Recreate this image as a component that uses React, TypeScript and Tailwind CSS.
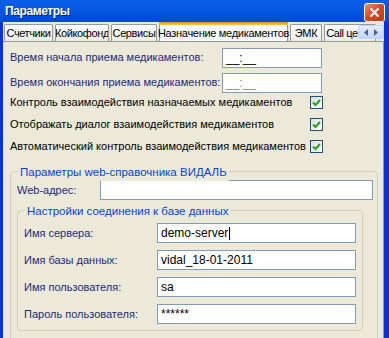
const font = { fontFamily: '"Liberation Sans", Arial, sans-serif' };

function TextBox({ value, w, dim, caret }: { value: string; w: string; dim?: boolean; caret?: boolean }) {
  return (
    <div className={`${w} shrink-0 h-[20px] border border-[#7f9db9] bg-white flex items-center px-[3px] text-[12px] ${dim ? "text-[#8a8a8a]" : "text-black"}`}>
      {value}
      {caret && <span className="ml-[1px] inline-block h-[13px] w-[1px] bg-black" />}
    </div>
  );
}

function Check() {
  return (
    <div className="w-[13px] h-[13px] shrink-0 border border-[#1c5180] bg-gradient-to-br from-[#dcdcd7] to-white flex items-center justify-center">
      <svg width="9" height="9" viewBox="0 0 9 9">
        <path d="M1 4.5 L3.5 7 L8 2" stroke="#21a121" strokeWidth="2" fill="none" />
      </svg>
    </div>
  );
}

function Tab({ label, w, active }: { label: string; w: string; active?: boolean }) {
  if (active) {
    return (
      <div className={`${w} shrink-0 h-[20px] border-x border-[#919b9c] bg-[#fcfcfe] relative z-10 flex flex-col whitespace-nowrap`}>
        <div className="h-[3px] bg-gradient-to-b from-[#e68b2c] to-[#ffc73c] -mx-[1px] rounded-t-[2px]" />
        <div className="flex-1 flex items-center justify-center text-[11px] tracking-[-0.3px] text-black">{label}</div>
      </div>
    );
  }
  return (
    <div className={`${w} shrink-0 h-[17px] mt-[2px] border border-b-0 border-[#919b9c] rounded-t-[2px] bg-gradient-to-b from-white to-[#ecebe6] flex items-center justify-center text-[11px] tracking-[-0.4px] text-black overflow-hidden whitespace-nowrap`}>
      {label}
    </div>
  );
}

function Row({ label, children }: { label: string; children: React.ReactNode }) {
  return (
    <div className="flex items-center h-[20px]">
      <div className="w-[133px] shrink-0 text-[11px] text-[#1b2a7a] whitespace-nowrap">{label}</div>
      {children}
    </div>
  );
}

export default function App() {
  return (
    <div style={font} className="w-[389px] h-[338px] overflow-hidden bg-[#0831d9] flex flex-col">
      {/* title bar */}
      <div className="h-[22px] shrink-0 bg-gradient-to-b from-[#0a5fe9] via-[#0457e0] to-[#0249cd] flex items-center justify-between pl-[5px] pr-[4px]">
        <span className="text-white font-bold text-[12px] tracking-[-0.4px] [text-shadow:1px_1px_#0a1e6e]">Параметры</span>
        <div className="w-[21px] h-[19px] mt-[2px] rounded-[3px] border border-white bg-gradient-to-br from-[#e98a6e] via-[#d7471f] to-[#c23a12] flex items-center justify-center">
          <svg width="11" height="11" viewBox="0 0 11 11">
            <path d="M1.5 1.5 L9.5 9.5 M9.5 1.5 L1.5 9.5" stroke="white" strokeWidth="2.2" />
          </svg>
        </div>
      </div>

      {/* body */}
      <div className="flex-1 ml-[3px] mr-[5px] bg-[#ece9d8] flex flex-col">
        {/* tabs */}
        <div className="h-[19px] shrink-0 flex items-start gap-[2px] pl-[1px] relative overflow-hidden">
          <Tab label="Счетчики" w="w-[49px]" />
          <Tab label="Койкофонд" w="w-[54px]" />
          <Tab label="Сервисы" w="w-[46px]" />
          <Tab label="Назначение медикаментов" w="w-[129px]" active />
          <Tab label="ЭМК" w="w-[32px]" />
          <Tab label="Call центр" w="w-[52px]" />
          <div className="absolute right-0 top-[3px] w-[26px] h-[14px] border border-[#c3d3fd] bg-gradient-to-b from-[#e4ecfd] to-[#c1d3fb] rounded-[2px] flex items-center justify-around px-[2px]">
            <svg width="4" height="7" viewBox="0 0 4 7"><path d="M4 0 L0 3.5 L4 7Z" fill="#4d6185" /></svg>
            <svg width="4" height="7" viewBox="0 0 4 7"><path d="M0 0 L4 3.5 L0 7Z" fill="#4d6185" /></svg>
          </div>
        </div>

        {/* panel */}
        <div className="flex-1 border-t border-r border-[#919b9c] pl-[7px] pt-[6px]">
          <div className="flex flex-col gap-[6px]">
            <div className="flex items-center h-[19px]">
              <div className="w-[212px] shrink-0 text-[11px] text-[#1b2a7a] whitespace-nowrap">Время начала приема медикаментов:</div>
              <TextBox value="__:__" w="w-[100px]" />
            </div>
            <div className="flex items-center h-[19px]">
              <div className="w-[212px] shrink-0 text-[11px] text-[#1b2a7a] whitespace-nowrap">Время окончания приема медикаментов:</div>
              <TextBox value="__:__" w="w-[100px]" dim />
            </div>
          </div>

          <div className="flex flex-col gap-[9px] mt-[4px] text-[11px] text-black whitespace-nowrap">
            <div className="flex items-center h-[13px]">
              <div className="w-[300px] shrink-0">Контроль взаимодействия назначаемых медикаментов</div>
              <Check />
            </div>
            <div className="flex items-center h-[13px]">
              <div className="w-[300px] shrink-0">Отображать диалог взаимодействия медикаментов</div>
              <Check />
            </div>
            <div className="flex items-center h-[13px]">
              <div className="w-[300px] shrink-0">Автоматический контроль взаимодействия медикаментов</div>
              <Check />
            </div>
          </div>

          {/* VIDAL group */}
          <div className="mt-[18px] mr-[5px] relative border border-[#d0d0bf] rounded-[4px] h-[200px] pl-[6px] pt-[8px]">
            <span className="absolute -top-[8px] left-[7px] px-[2px] bg-[#ece9d8] text-[11.5px] text-[#0046d5] whitespace-nowrap">Параметры web-справочника ВИДАЛЬ</span>
            <div className="flex items-center h-[20px]">
              <div className="w-[83px] shrink-0 text-[11px] text-[#1b2a7a]">Web-адрес:</div>
              <TextBox value="" w="w-[273px]" />
            </div>

            <div className="mt-[10px] mr-[14px] relative border border-[#d0d0bf] rounded-[4px] h-[121px] pl-[6px] pt-[12px] flex flex-col gap-[7px]">
              <span className="absolute -top-[8px] left-[7px] px-[2px] bg-[#ece9d8] text-[11.5px] text-[#0046d5] whitespace-nowrap">Настройки соединения к базе данных</span>
              <Row label="Имя сервера:"><TextBox value="demo-server" w="w-[199px]" caret /></Row>
              <Row label="Имя базы данных:"><TextBox value="vidal_18-01-2011" w="w-[199px]" /></Row>
              <Row label="Имя пользователя:"><TextBox value="sa" w="w-[199px]" /></Row>
              <Row label="Пароль пользователя:"><TextBox value="******" w="w-[199px]" /></Row>
            </div>
          </div>
        </div>
      </div>
    </div>
  );
}
